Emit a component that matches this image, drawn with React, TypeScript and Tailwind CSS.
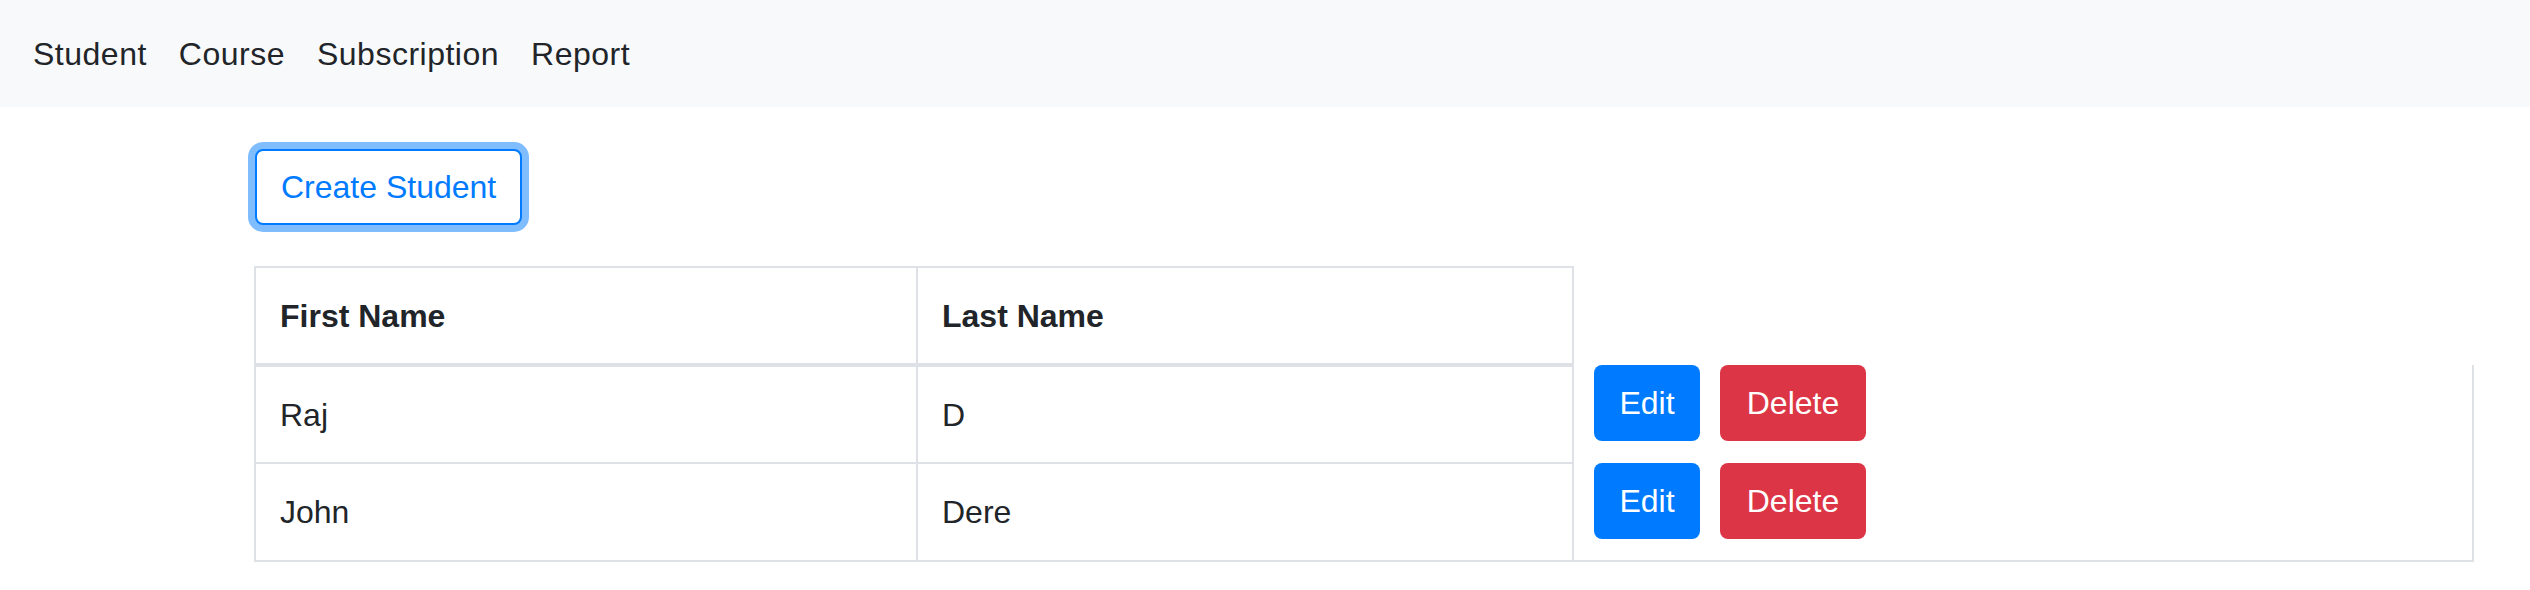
import React from 'react';

const students = [
    { first: 'Raj', last: 'D' },
    { first: 'John', last: 'Dere' },
];

const font = { fontFamily: '"Liberation Sans", Arial, sans-serif' };

export default function App() {
    return (
        <div className="min-h-screen bg-white text-[#212529]" style={font}>
            {/* Top nav */}
            <nav className="h-[107px] bg-[#f8f9fa] flex items-center pl-[17px]">
                {['Student', 'Course', 'Subscription', 'Report'].map((item) => (
                    <a key={item} className="px-[16px] text-[32px] leading-[48px] tracking-[0.5px] text-[#212529] cursor-pointer">
                        {item}
                    </a>
                ))}
            </nav>

            <div className="ml-[254px] pt-[42px]">
                <button className="ml-[1px] h-[76px] px-[24px] border-2 border-[#007bff] rounded-[8px] text-[32px] leading-[48px] text-[#007bff] bg-white shadow-[0_0_0_7px_rgba(0,123,255,0.5)]">
                    Create Student
                </button>

                {/* Student table */}
                <div className="mt-[41px] flex items-end">
                    <div className="w-[1320px] border-2 border-[#dee2e6]">
                        <div className="flex h-[99px] border-b-4 border-[#dee2e6] font-bold text-[32px]">
                            <div className="w-[660px] px-[24px] flex items-center">First Name</div>
                            <div className="flex-1 border-l-2 border-[#dee2e6] px-[24px] flex items-center">Last Name</div>
                        </div>
                        {students.map((s, i) => (
                            <div
                                key={s.first}
                                className={`flex text-[32px] ${i === 0 ? 'h-[97px] border-b-2 border-[#dee2e6]' : 'h-[96px]'}`}
                            >
                                <div className="w-[660px] px-[24px] flex items-center">{s.first}</div>
                                <div className="flex-1 border-l-2 border-[#dee2e6] px-[24px] flex items-center">{s.last}</div>
                            </div>
                        ))}
                    </div>

                    {/* Actions column */}
                    <div className="w-[900px] h-[197px] border-r-2 border-b-2 border-[#dee2e6] pl-[20px] flex flex-col gap-[22px]">
                        {students.map((s) => (
                            <div key={s.first} className="flex gap-[20px]">
                                <button className="h-[76px] w-[106px] rounded-[8px] bg-[#007bff] text-white text-[32px] leading-[48px]">
                                    Edit
                                </button>
                                <button className="h-[76px] w-[146px] rounded-[8px] bg-[#dc3545] text-white text-[32px] leading-[48px]">
                                    Delete
                                </button>
                            </div>
                        ))}
                    </div>
                </div>
            </div>
        </div>
    );
}
